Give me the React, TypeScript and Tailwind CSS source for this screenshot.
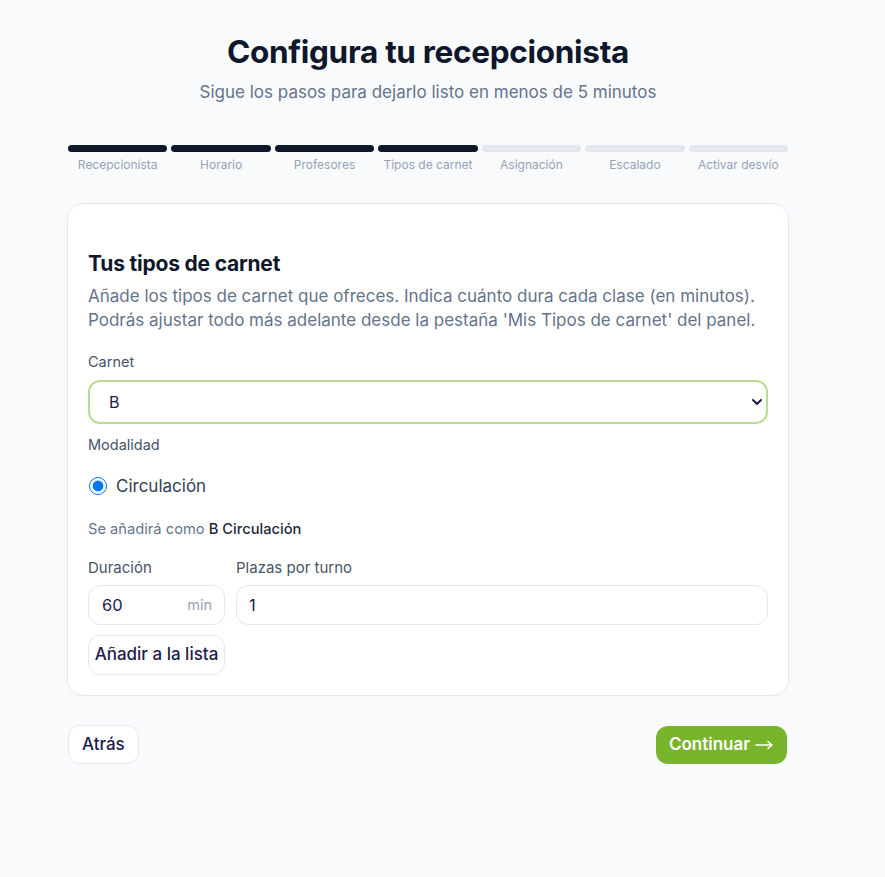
import React, { useState } from "react";

const steps = [
  "Recepcionista",
  "Horario",
  "Profesores",
  "Tipos de carnet",
  "Asignación",
  "Escalado",
  "Activar desvío",
];

const App = () => {
  const [carnet, setCarnet] = useState("B");
  const [duracion, setDuracion] = useState("60");
  const [plazas, setPlazas] = useState("1");
  const current = 3;

  return (
    <div
      className="min-h-[877px] bg-[#f8fafc] text-[#0f172a]"
      style={{ fontFamily: "Inter, 'Liberation Sans', sans-serif" }}
    >
      <div className="ml-[68px] w-[720px] pt-[33px]">
        {/* header */}
        <div className="text-center">
          <h1 className="text-[31.5px] font-bold leading-[38px] tracking-[-0.3px] text-[#0f172a]">
            Configura tu recepcionista
          </h1>
          <p className="mt-[9px] text-[17px] leading-6 text-[#64748b]">
            Sigue los pasos para dejarlo listo en menos de 5 minutos
          </p>
        </div>

        {/* stepper */}
        <div className="mt-[41px] grid grid-cols-7 gap-1">
          {steps.map((s, i) => (
            <div key={s} className="flex flex-col items-center">
              <div
                className={`h-[7px] w-full rounded-full ${
                  i <= current ? "bg-[#0f172a]" : "bg-[#e2e8f0]"
                }`}
              ></div>
              <span className="mt-[5px] text-[12px] leading-4 text-[#94a3b8]">{s}</span>
            </div>
          ))}
        </div>

        {/* card */}
        <div className="mt-[30px] -mx-px rounded-2xl border border-[#e2e8f0] bg-white px-5 pb-5 pt-[46px]">
          <h2 className="text-[21px] font-bold leading-7 tracking-[-0.2px] text-[#0f172a]">Tus tipos de carnet</h2>
          <p className="mt-[6px] text-[17px] leading-6 text-[#64748b]">
            Añade los tipos de carnet que ofreces. Indica cuánto dura cada clase (en minutos).
            <br />
            Podrás ajustar todo más adelante desde la pestaña 'Mis Tipos de carnet' del panel.
          </p>

          <label className="mt-[20px] block text-[14.5px] leading-5 text-[#475569]">Carnet</label>
          <div className="relative mt-2">
            <select
              value={carnet}
              onChange={(e) => setCarnet(e.target.value)}
              className="h-[44px] w-full appearance-none rounded-xl border-2 border-[#b8dc92] bg-white pl-[19px] text-[16px] text-[#1e1b4b] outline-none"
            >
              <option value="A">A</option>
              <option value="B">B</option>
              <option value="C">C</option>
            </select>
            <svg
              className="pointer-events-none absolute right-[5px] top-[17px]"
              width="12"
              height="10"
              viewBox="0 0 12 10"
              fill="none"
            >
              <path d="M2 3l4 4 4-4" stroke="#1e1b4b" strokeWidth="2" strokeLinecap="round" strokeLinejoin="round" />
            </svg>
          </div>

          <label className="mt-[11px] block text-[14.5px] leading-5 text-[#475569]">Modalidad</label>
          <label className="mt-[19px] flex items-center gap-[9px]">
            <input type="radio" name="modalidad" defaultChecked className="ml-[1px] h-[18px] w-[18px]" />
            <span className="text-[17px] leading-6 text-[#334155]">Circulación</span>
          </label>

          <p className="mt-[21px] text-[14.7px] leading-5 text-[#64748b]">
            Se añadirá como <span className="font-medium text-[#1e293b]">B Circulación</span>
          </p>

          <div className="mt-[19px] flex gap-[11px]">
            <div className="w-[137px]">
              <label className="block text-[15px] leading-5 text-[#475569]">Duración</label>
              <div className="mt-[7px] flex h-[40px] items-center rounded-xl border border-[#e2e8f0] bg-white px-3">
                <input
                  value={duracion}
                  onChange={(e) => setDuracion(e.target.value)}
                  className="w-full min-w-0 bg-transparent pl-[1px] text-[16.5px] text-[#1e1b4b] outline-none"
                />
                <span className="text-[14.5px] text-[#94a3b8]">min</span>
              </div>
            </div>
            <div className="flex-1">
              <label className="block text-[15px] leading-5 text-[#475569]">Plazas por turno</label>
              <input
                value={plazas}
                onChange={(e) => setPlazas(e.target.value)}
                className="mt-[7px] h-[40px] w-full rounded-xl border border-[#e2e8f0] bg-white px-3 text-[16.5px] text-[#1e1b4b] outline-none"
              />
            </div>
          </div>

          <button className="mt-[10px] h-[40px] w-[137px] rounded-xl border border-[#e2e8f0] bg-white text-[17px] font-medium text-[#1e1b4b]">
            Añadir a la lista
          </button>
        </div>

        {/* footer */}
        <div className="mt-[29px] flex items-center justify-between">
          <button className="h-[39px] rounded-xl border border-[#e2e8f0] bg-white px-[13px] text-[17px] font-medium text-[#1e1b4b]">
            Atrás
          </button>
          <button className="mr-px flex h-[38px] items-center gap-[5px] rounded-xl bg-[#79b52a] px-[13px] text-[17px] font-semibold text-white">
            Continuar
            <svg width="19" height="10" viewBox="0 0 19 10" fill="none">
              <path d="M1 5h16M13 1.5L17 5l-4 3.5" stroke="white" strokeWidth="1.6" strokeLinecap="round" strokeLinejoin="round" />
            </svg>
          </button>
        </div>
      </div>
    </div>
  );
};

export default App;
